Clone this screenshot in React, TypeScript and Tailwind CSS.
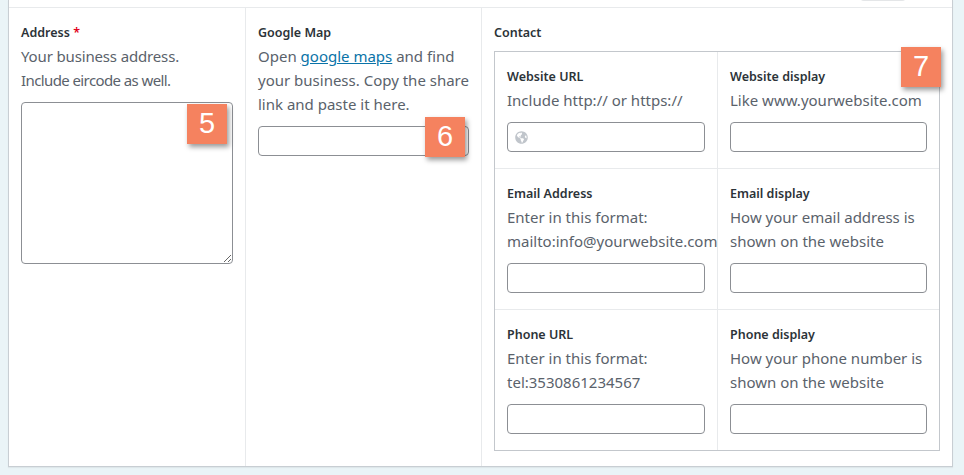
import React from "react";
import { FaGlobeAmericas } from "react-icons/fa";

const font = "font-['Noto_Sans','Open_Sans',sans-serif]";

function Label({ children }: { children: React.ReactNode }) {
  return <div className="h-6 text-[12.5px] font-semibold leading-[26px] text-[#2c3338]">{children}</div>;
}

function Help({ children }: { children: React.ReactNode }) {
  return <div className="text-[15px] leading-6 text-[#5a626b]">{children}</div>;
}

function Input({ icon }: { icon?: boolean }) {
  return (
    <div className="relative mt-[10px]">
      {icon && <FaGlobeAmericas className="absolute left-2 top-[9px] text-[13px] text-[#c0c5cb]" />}
      <input className="block h-[30px] w-full rounded-[4px] border border-[#8c8f94] bg-white" />
    </div>
  );
}

function Badge({ n, className }: { n: string; className: string }) {
  return (
    <div
      className={`absolute flex h-10 w-10 items-center justify-center bg-[#f5825f] font-['Liberation_Sans',sans-serif] text-[29px] text-white shadow-[2px_3px_5px_rgba(0,0,0,0.4)] ${className}`}
    >
      {n}
    </div>
  );
}

function Cell({
  label,
  lines,
  icon,
  right,
  bottom,
}: {
  label: string;
  lines: string[];
  icon?: boolean;
  right?: boolean;
  bottom?: boolean;
}) {
  return (
    <div
      className={`min-w-0 pb-4 pl-3 pr-3 pt-3 ${right ? "" : "border-r border-[#e8eaec]"} ${
        bottom ? "" : "border-b border-[#e8eaec]"
      }`}
    >
      <Label>{label}</Label>
      {lines.map((l) => (
        <div key={l} className="whitespace-nowrap">
          <Help>{l}</Help>
        </div>
      ))}
      <Input icon={icon} />
    </div>
  );
}

export default function App() {
  return (
    <div className={`h-[475px] w-[964px] overflow-hidden bg-[#eaf4f7] pl-2 pr-[11px] ${font}`}>
      <div className="relative h-[467px] border-x border-b border-[#c8ced3] bg-white pt-[7px] shadow-[0_1px_1px_rgba(0,0,0,0.05)]">
        <div className="absolute right-[46px] top-[-7px] h-2 w-[46px] rounded-full bg-[#e4e6e8]" />
        <div className="grid h-[459px] grid-cols-[237px_236px_1fr] border-t border-[#e8eaec]">
          <div className="relative border-r border-[#e8eaec] pl-3 pr-3 pt-3">
            <Label>
              Address <span className="text-[#e2001a]">*</span>
            </Label>
            <Help>
              <span className="tracking-[-0.15px]">Your business address.</span>
              <br />
              <span className="tracking-[-0.6px]">Include eircode as well.</span>
            </Help>
            <textarea className="mt-[10px] block h-[162px] w-[212px] rounded-[4px] border border-[#8c8f94] bg-white" />
            <Badge n="5" className="left-[178px] top-[96px]" />
          </div>
          <div className="relative border-r border-[#e8eaec] pl-3 pr-3 pt-3">
            <Label>Google Map</Label>
            <Help>
              Open{" "}
              <a href="#" className="text-[#0a73a8] underline">
                google maps
              </a>{" "}
              and find
              <br />
              your business. Copy the share
              <br />
              link and paste it here.
            </Help>
            <Input />
            <Badge n="6" className="left-[179px] top-[109px]" />
          </div>
          <div className="relative pl-3 pr-3 pt-3">
            <Label>Contact</Label>
            <div className="mt-[7px] grid w-[446px] grid-cols-[223px_1fr] border border-[#c3c7cc]">
              <Cell label="Website URL" lines={["Include http:// or https://"]} icon />
              <Cell label="Website display" lines={["Like www.yourwebsite.com"]} right />
              <Cell label="Email Address" lines={["Enter in this format:", "mailto:info@yourwebsite.com"]} />
              <Cell label="Email display" lines={["How your email address is", "shown on the website"]} right />
              <Cell label="Phone URL" lines={["Enter in this format:", "tel:3530861234567"]} bottom />
              <Cell label="Phone display" lines={["How your phone number is", "shown on the website"]} right bottom />
            </div>
            <Badge n="7" className="left-[419px] top-[39px]" />
          </div>
        </div>
      </div>
    </div>
  );
}
